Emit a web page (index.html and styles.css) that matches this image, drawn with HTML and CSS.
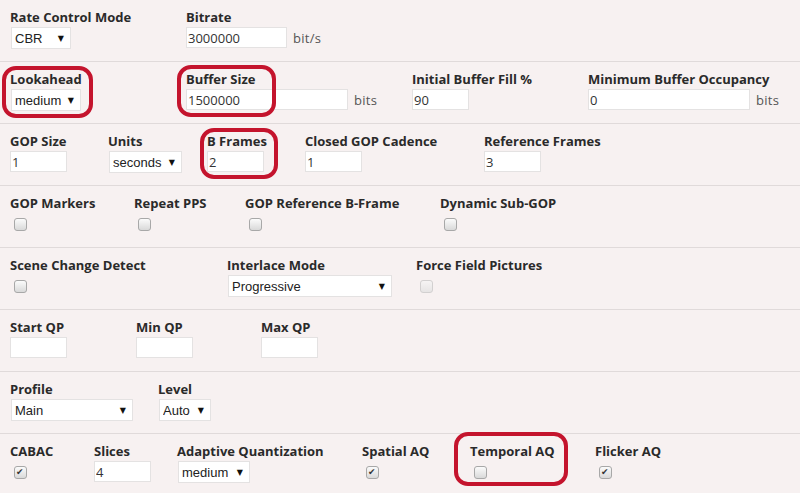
FILE: index.html
```html
<!DOCTYPE html>
<html>
<head>
    <title>Encoder Settings</title>
    <link rel="stylesheet" href="styles.css">
</head>
<body>

<div class="panel">
    <div class="row row-rate">
        <div class="field">
            <label>Rate Control Mode</label>
            <span class="select sel-cbr"><select><option>CBR</option></select></span>
        </div>
        <div class="field">
            <label>Bitrate</label>
            <div class="control"><input class="txt txt-mid" type="text" value="3000000"><span class="unit">bit/s</span></div>
        </div>
    </div>

    <div class="row row-buffer">
        <div class="field">
            <span class="ring ring-lookahead"></span>
            <label>Lookahead</label>
            <span class="select sel-look"><select><option>medium</option></select></span>
        </div>
        <div class="field">
            <span class="ring ring-buffer"></span>
            <label>Buffer Size</label>
            <div class="control"><input class="txt txt-wide" type="text" value="1500000"><span class="unit">bits</span></div>
        </div>
        <div class="field">
            <label>Initial Buffer Fill %</label>
            <div class="control"><input class="txt" type="text" value="90"></div>
        </div>
        <div class="field">
            <label>Minimum Buffer Occupancy</label>
            <div class="control"><input class="txt txt-wide" type="text" value="0"><span class="unit">bits</span></div>
        </div>
    </div>

    <div class="row row-gop">
        <div class="field">
            <label>GOP Size</label>
            <div class="control"><input class="txt" type="text" value="1"></div>
        </div>
        <div class="field">
            <label>Units</label>
            <span class="select sel-units"><select><option>seconds</option></select></span>
        </div>
        <div class="field">
            <span class="ring ring-bframes"></span>
            <label>B Frames</label>
            <div class="control"><input class="txt" type="text" value="2"></div>
        </div>
        <div class="field">
            <label>Closed GOP Cadence</label>
            <div class="control"><input class="txt" type="text" value="1"></div>
        </div>
        <div class="field">
            <label>Reference Frames</label>
            <div class="control"><input class="txt" type="text" value="3"></div>
        </div>
    </div>

    <div class="row row-markers">
        <div class="field">
            <label>GOP Markers</label>
            <input class="check" type="checkbox">
        </div>
        <div class="field">
            <label>Repeat PPS</label>
            <input class="check" type="checkbox">
        </div>
        <div class="field">
            <label>GOP Reference B-Frame</label>
            <input class="check" type="checkbox">
        </div>
        <div class="field">
            <label>Dynamic Sub-GOP</label>
            <input class="check" type="checkbox">
        </div>
    </div>

    <div class="row row-scene">
        <div class="field">
            <label>Scene Change Detect</label>
            <input class="check" type="checkbox">
        </div>
        <div class="field">
            <label>Interlace Mode</label>
            <span class="select sel-interlace"><select><option>Progressive</option></select></span>
        </div>
        <div class="field">
            <label>Force Field Pictures</label>
            <input class="check" type="checkbox" disabled>
        </div>
    </div>

    <div class="row row-qp">
        <div class="field">
            <label>Start QP</label>
            <div class="control"><input class="txt" type="text"></div>
        </div>
        <div class="field">
            <label>Min QP</label>
            <div class="control"><input class="txt" type="text"></div>
        </div>
        <div class="field">
            <label>Max QP</label>
            <div class="control"><input class="txt" type="text"></div>
        </div>
    </div>

    <div class="row row-profile">
        <div class="field">
            <label>Profile</label>
            <span class="select sel-profile"><select><option>Main</option></select></span>
        </div>
        <div class="field">
            <label>Level</label>
            <span class="select sel-level"><select><option>Auto</option></select></span>
        </div>
    </div>

    <div class="row row-aq">
        <div class="field">
            <label>CABAC</label>
            <input class="check" type="checkbox" checked>
        </div>
        <div class="field">
            <label>Slices</label>
            <div class="control"><input class="txt" type="text" value="4"></div>
        </div>
        <div class="field">
            <label>Adaptive Quantization</label>
            <span class="select sel-aq"><select><option>medium</option></select></span>
        </div>
        <div class="field">
            <label>Spatial AQ</label>
            <input class="check" type="checkbox" checked>
        </div>
        <div class="field">
            <span class="ring ring-temporal"></span>
            <label>Temporal AQ</label>
            <input class="check" type="checkbox">
        </div>
        <div class="field">
            <label>Flicker AQ</label>
            <input class="check" type="checkbox" checked>
        </div>
    </div>
</div>

</body>
</html>
```

FILE: styles.css
```css
body {
    margin: 0;
    background: #f7f1f1;
    font-family: "Open Sans", "DejaVu Sans", sans-serif;
    font-size: 13px;
    color: #333;
    overflow: hidden;
}
.row {
    display: grid;
    height: 62px;
    box-sizing: border-box;
    padding: 9px 0 0 10px;
    border-bottom: 1px solid #e0dada;
}
.row-rate { grid-template-columns: 176px auto; }
.row-buffer { grid-template-columns: 176px 226px 176px auto; }
.row-gop { grid-template-columns: 98px 99px 98px 179px auto; }
.row-markers { grid-template-columns: 124px 111px 195px auto; }
.row-scene { grid-template-columns: 217px 189px auto; }
.row-qp { grid-template-columns: 126px 125px auto; }
.row-profile { grid-template-columns: 148px auto; }
.row-aq { grid-template-columns: 84px 83px 185px 108px 125px auto; }

.field {
    position: relative;
    display: flex;
    flex-direction: column;
    align-items: flex-start;
}
.field label {
    display: block;
    font-weight: bold;
    line-height: 16px;
    white-space: nowrap;
    color: #2a2a2a;
}
.control {
    display: flex;
    align-items: center;
    margin-top: 2px;
}
.txt {
    width: 57px;
    height: 21px;
    box-sizing: border-box;
    margin: 0;
    padding: 0 1px;
    border: 1px solid #e4e2e2;
    background: #fff;
    font-family: "Open Sans", sans-serif;
    font-size: 13px;
    color: #333;
    outline: none;
}
.txt-mid { width: 101px; }
.txt-wide { width: 162px; }
.unit {
    margin-left: 6px;
    color: #555;
    letter-spacing: 0.3px;
}

.select {
    position: relative;
    display: block;
    margin-top: 2px;
    margin-left: 1px;
}
.select select {
    -webkit-appearance: none;
    appearance: none;
    width: 100%;
    height: 22px;
    margin: 0;
    padding: 0 0 0 3px;
    border: 1px solid #e4e2e2;
    border-radius: 0;
    background: #fff;
    font-family: "Liberation Sans", Arial, sans-serif;
    font-size: 13px;
    color: #222;
    outline: none;
}
.select::after {
    content: "\25BC";
    position: absolute;
    right: 7px;
    top: 6px;
    font-size: 8px;
    line-height: 10px;
    color: #111;
    pointer-events: none;
}
.sel-cbr { width: 60px; }
.sel-look { width: 70px; }
.sel-units { width: 73px; }
.sel-interlace { width: 164px; }
.sel-profile { width: 122px; }
.sel-level { width: 52px; }
.sel-aq { width: 72px; }

.check {
    -webkit-appearance: none;
    appearance: none;
    position: relative;
    width: 13px;
    height: 13px;
    margin: 7px 0 0 4px;
    border: 1px solid #a8a8a8;
    border-radius: 3px;
    background: linear-gradient(#fbfbfb, #d9d9d9);
}
.check:checked::after {
    content: "\2714";
    position: absolute;
    left: 1px;
    top: -1px;
    font-family: "DejaVu Sans", sans-serif;
    font-size: 9px;
    line-height: 13px;
    color: #333;
}
.check:disabled {
    border-color: #d2d0d0;
    background: linear-gradient(#f6f4f4, #e6e4e4);
}

.ring {
    position: absolute;
    border: 4px solid #c4142d;
    border-radius: 14px;
    pointer-events: none;
}
.ring-lookahead { left: -8px; top: -5px; width: 83px; height: 44px; }
.ring-buffer { left: -9px; top: -6px; width: 91px; height: 44px; }
.ring-bframes { left: -7px; top: -5px; width: 70px; height: 43px; }
.ring-temporal { left: -16px; top: -11px; width: 106px; height: 46px; }
```
